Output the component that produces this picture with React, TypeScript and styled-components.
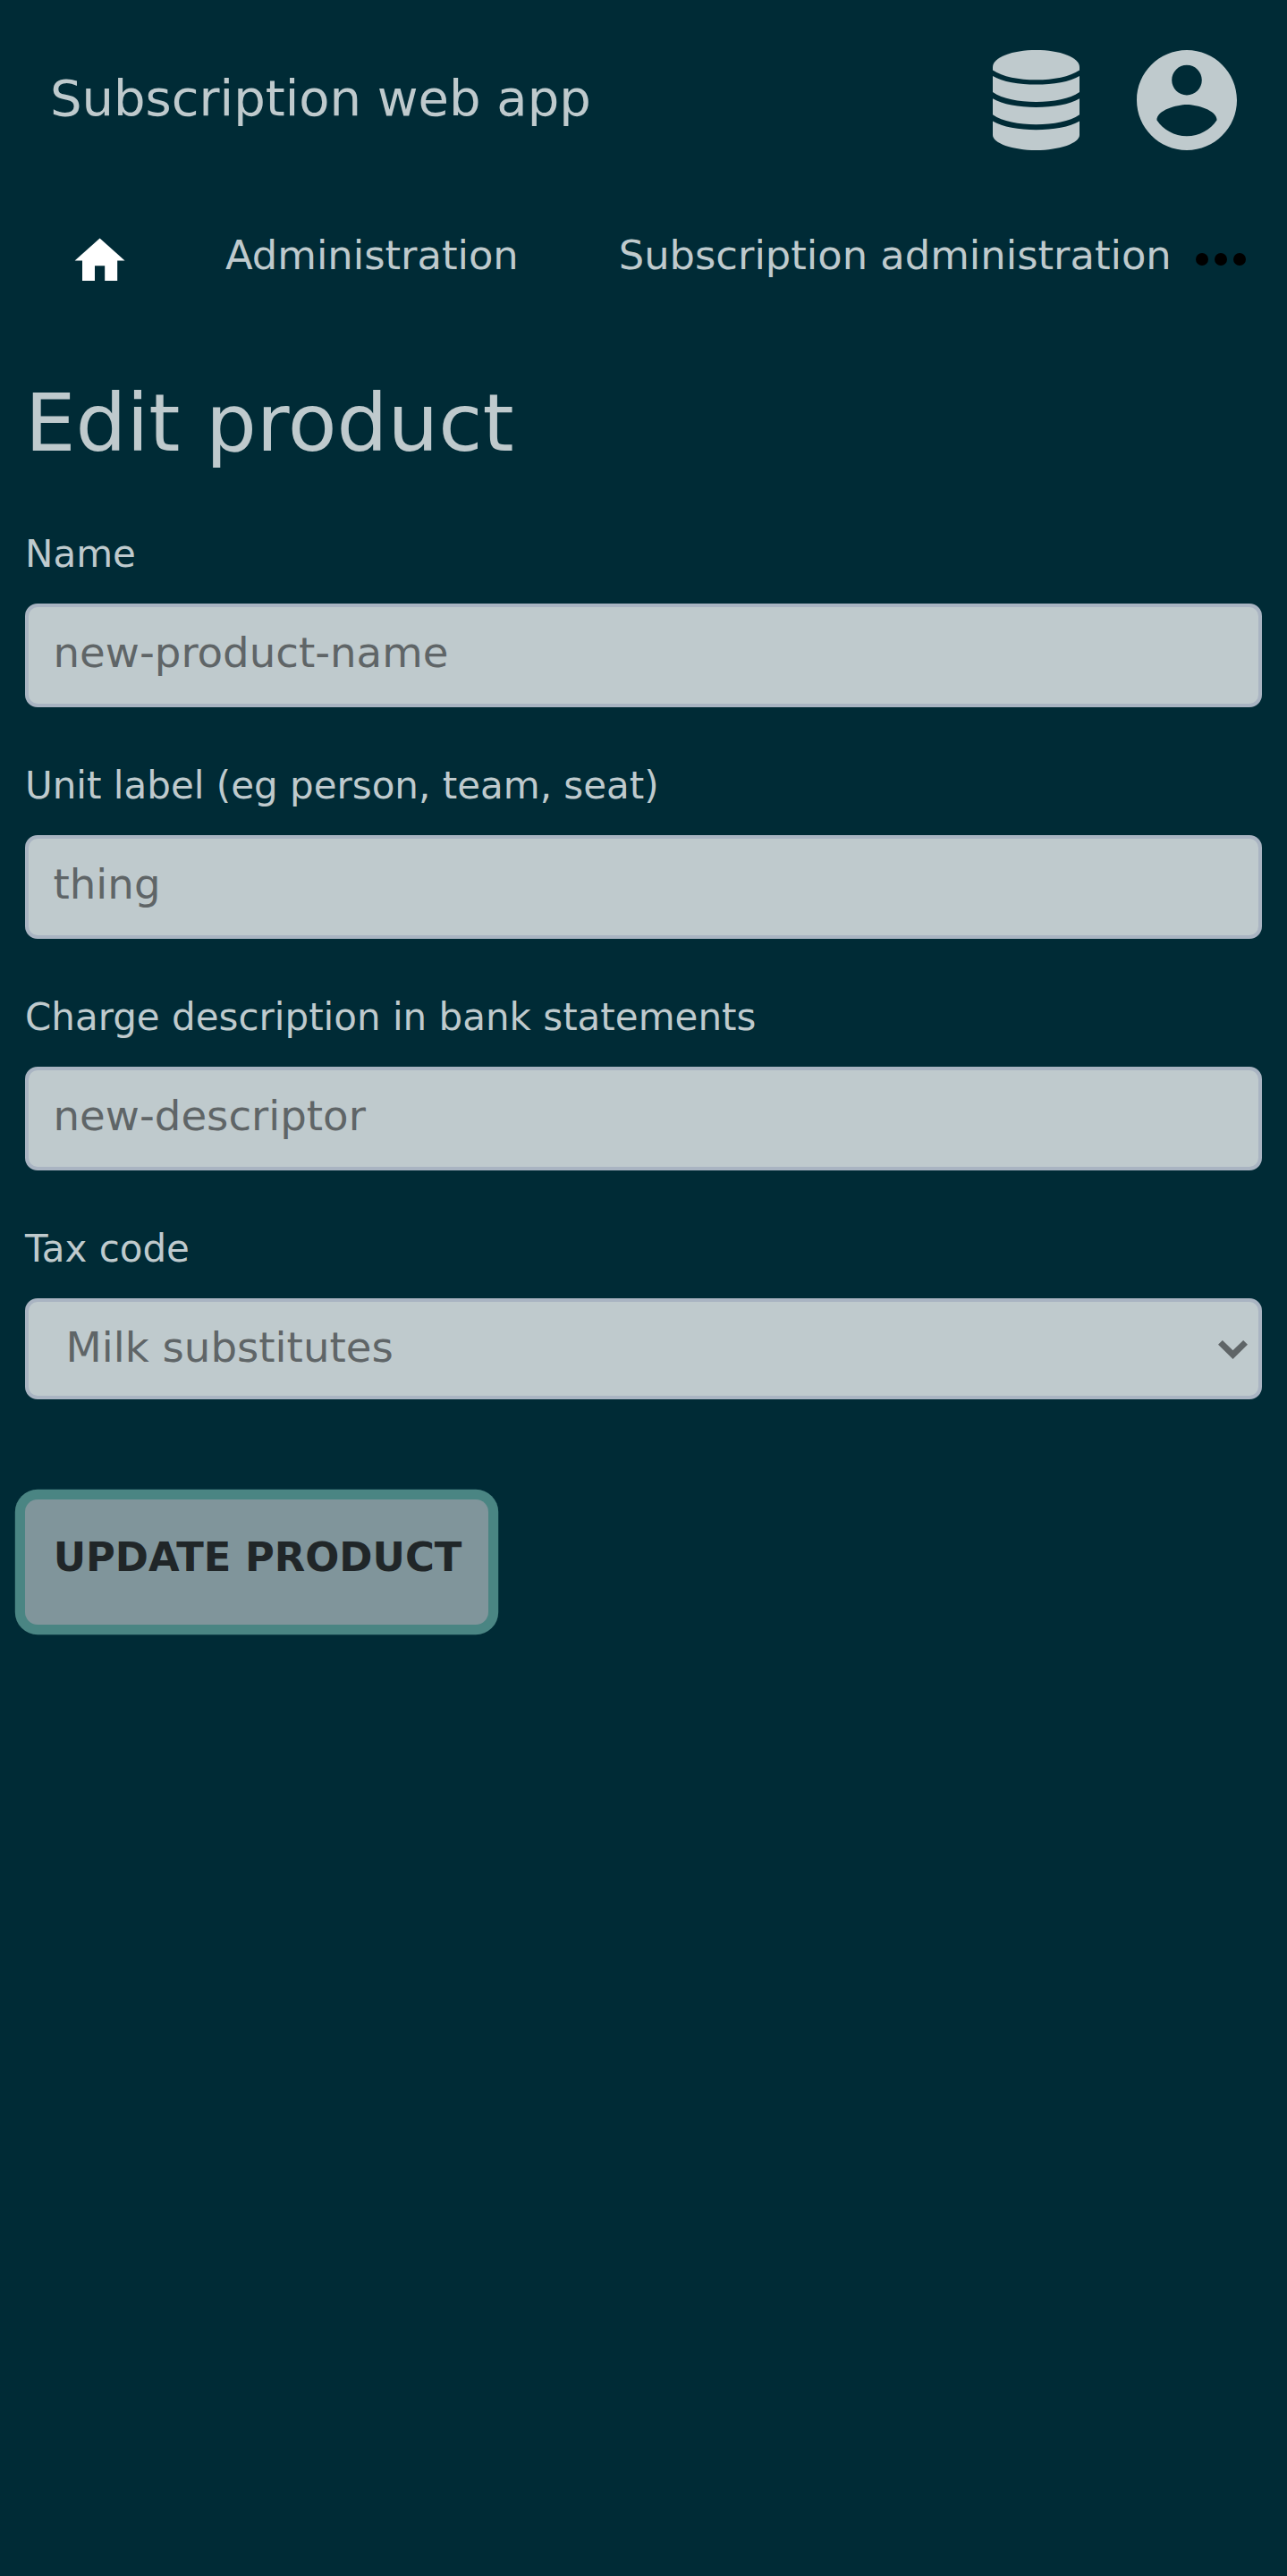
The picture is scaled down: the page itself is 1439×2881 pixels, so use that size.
import React from "react";
import styled, { createGlobalStyle } from "styled-components";

const ink = "#bfcacd";

const GlobalStyle = createGlobalStyle`
  *, *::before, *::after { box-sizing: border-box; }
  body {
    margin: 0;
    background: #002b36;
    color: ${ink};
    font-family: "DejaVu Sans", sans-serif;
  }
`;

const Page = styled.div`
  min-height: 2881px;
  overflow: hidden;
`;

const Header = styled.header`
  display: flex;
  align-items: center;
  justify-content: space-between;
  height: 224px;
  padding: 0 56.4px 0 56px;
`;

const Brand = styled.div`
  padding-bottom: 4px;
  font-size: 56px;
  line-height: 66px;
`;

const Tools = styled.div`
  display: flex;
  align-items: center;
  gap: 63.5px;
`;

const Icon = styled.svg<{ $w: number; $h: number }>`
  display: block;
  flex: none;
  width: ${(p) => p.$w}px;
  height: ${(p) => p.$h}px;
  fill: currentColor;
`;

const Nav = styled.nav`
  display: flex;
  align-items: flex-start;
  height: 140px;
  padding-left: 78.4px;
`;

const HomeLink = styled.a`
  color: #fff;
  margin-top: 34.3px;
`;

const NavLink = styled.a<{ $gap: number }>`
  margin: 35px 0 0 ${(p) => p.$gap}px;
  font-size: 44.8px;
  line-height: 53px;
  white-space: nowrap;
`;

const More = styled.span`
  color: #000;
  margin: 59px 0 0 27px;
`;

const Main = styled.main`
  padding: 57px 28px 0;
`;

const Title = styled.h1`
  margin: 0 0 69px;
  font-size: 89.6px;
  line-height: 105px;
  font-weight: 400;
`;

const Field = styled.div`
  display: flex;
  flex-direction: column;
  height: 259px;
`;

const Label = styled.label`
  margin-bottom: 31px;
  font-size: 42px;
  line-height: 49px;
`;

const control = `
  display: block;
  width: 100%;
  margin: 0;
  border: 4px solid #a9b4c2;
  border-radius: 14px;
  background: ${ink};
  color: #5f6567;
  font-family: inherit;
  font-size: 46.667px;
  outline: none;
`;

const Input = styled.input`
  ${control}
  height: 116px;
  padding: 0 27.5px 6px;
`;

const SelectBox = styled.div`
  ${control}
  display: flex;
  align-items: center;
  justify-content: space-between;
  height: 113px;
  padding: 0 12px 3px 41.5px;
`;

const Chevron = styled(Icon)`
  margin-top: 5px;
`;

const Submit = styled.button`
  display: block;
  width: 518px;
  height: 140px;
  margin-top: 45.5px;
  padding: 0 0 11px 2px;
  border: 0;
  border-radius: 14px;
  outline: none;
  box-shadow: 0 0 0 11.2px #4a8583;
  background: #80959b;
  color: #202628;
  font-family: inherit;
  font-size: 44.8px;
  font-weight: 700;
  text-transform: uppercase;
  white-space: nowrap;
`;

const fields = [
  { id: "name", label: "Name", value: "new-product-name" },
  { id: "unit", label: "Unit label (eg person, team, seat)", value: "thing" },
  { id: "descriptor", label: "Charge description in bank statements", value: "new-descriptor" },
];

const bands = [29, 54.3];

export default function App() {
  return (
    <Page>
      <GlobalStyle />
      <Header>
        <Brand>Subscription web app</Brand>
        <Tools>
          <Icon $w={97} $h={112} viewBox="0 0 97 112">
            <path d="M48.5 0C75 0 97 8 97 19V22.500C86 30 68 33.300 48.500 33.300S11 30 0 22.500V19C0 8 22 0 48.500 0Z" />
            {bands.map((y) => (
              <path key={y} d={`M0 ${y}C11 ${y + 6.5} 29 ${y + 9.6} 48.5 ${y + 9.6}S86 ${y + 6.5} 97 ${y}V${y + 18}C86 ${y + 25.5} 68 ${y + 29} 48.5 ${y + 29}S11 ${y + 25.5} 0 ${y + 18}Z`} />
            ))}
            <path d="M0 79.600C11 86.100 29 89.200 48.500 89.200S86 86.100 97 79.600V95C97 104 75 112 48.500 112S0 104 0 95Z" />
          </Icon>
          <Icon $w={112} $h={112} viewBox="2 2 20 20">
            <path d="M12 2C6.480 2 2 6.480 2 12s4.480 10 10 10 10-4.480 10-10S17.520 2 12 2zm0 3c1.660 0 3 1.340 3 3s-1.340 3-3 3-3-1.340-3-3 1.340-3 3-3zm0 14.200c-2.500 0-4.710-1.280-6-3.220.030-1.990 4-3.080 6-3.080 1.990 0 5.970 1.090 6 3.080-1.290 1.940-3.500 3.220-6 3.220z" />
          </Icon>
        </Tools>
      </Header>
      <Nav>
        <HomeLink>
          <Icon $w={67.2} $h={67.2} viewBox="0 0 24 24">
            <path d="M10 20v-6h4v6h5v-8h3L12 3 2 12h3v8z" />
          </Icon>
        </HomeLink>
        <NavLink $gap={106.4}>Administration</NavLink>
        <NavLink $gap={112}>Subscription administration</NavLink>
        <More>
          <Icon $w={56} $h={14} viewBox="0 0 56 14">
            <circle cx="7" cy="7" r="7" />
            <circle cx="28" cy="7" r="7" />
            <circle cx="49" cy="7" r="7" />
          </Icon>
        </More>
      </Nav>
      <Main>
        <Title>Edit product</Title>
        {fields.map((f) => (
          <Field key={f.id}>
            <Label htmlFor={f.id}>{f.label}</Label>
            <Input id={f.id} defaultValue={f.value} />
          </Field>
        ))}
        <Field>
          <Label>Tax code</Label>
          <SelectBox>
            <span>Milk substitutes</span>
            <Chevron $w={33} $h={21} viewBox="0 0 33 21">
              <path d="M0 4.800 4.900 0 16.500 11.300 28.100 0 33 4.800 16.500 21Z" />
            </Chevron>
          </SelectBox>
        </Field>
        <Submit>Update product</Submit>
      </Main>
    </Page>
  );
}
